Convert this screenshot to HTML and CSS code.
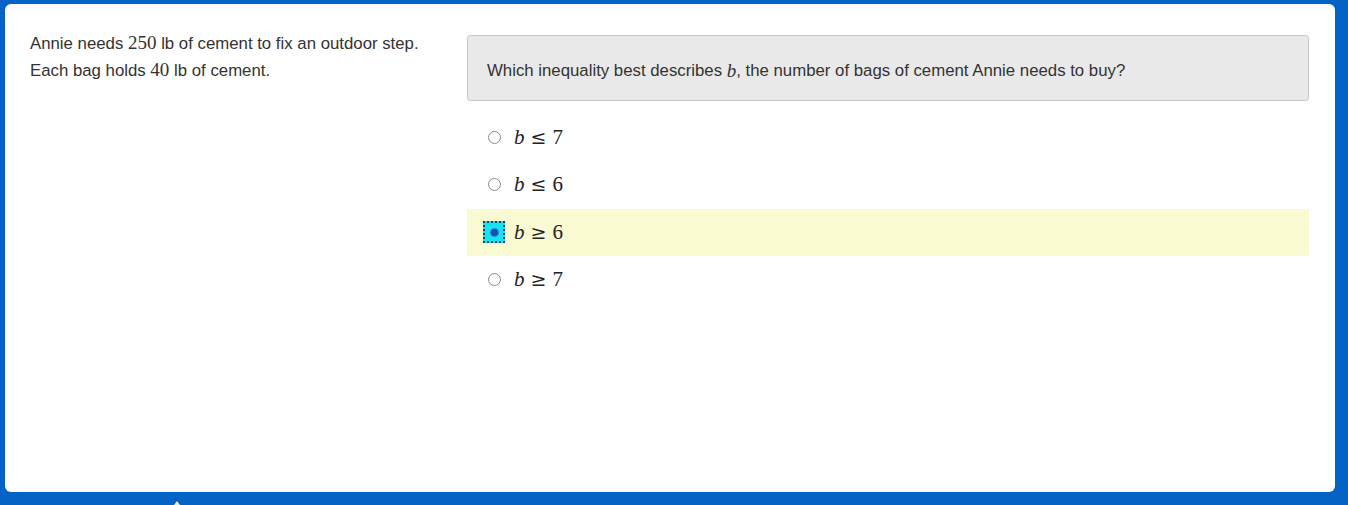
FILE: index.html
```html
<!DOCTYPE html>
<html>
<head>
<meta charset="utf-8">
<link rel="stylesheet" href="styles.css">
</head>
<body>
<div class="card">
  <div class="stimulus">
    <p>Annie needs <span class="m">250</span> lb of cement to fix an outdoor step.</p>
    <p>Each bag holds <span class="m">40</span> lb of cement.</p>
  </div>
  <div class="item">
    <div class="stem">Which inequality best describes <span class="m i">b</span>, the number of bags of cement Annie needs to buy?</div>
    <ul class="choices">
      <li class="choice"><span class="rwrap"><span class="radio"></span></span><span class="math"><span class="i">b</span><span class="op">≤</span>7</span></li>
      <li class="choice"><span class="rwrap"><span class="radio"></span></span><span class="math"><span class="i">b</span><span class="op">≤</span>6</span></li>
      <li class="choice selected"><span class="rwrap focus"><span class="radio checked"></span></span><span class="math"><span class="i">b</span><span class="op">≥</span>6</span></li>
      <li class="choice"><span class="rwrap"><span class="radio"></span></span><span class="math"><span class="i">b</span><span class="op">≥</span>7</span></li>
    </ul>
  </div>
</div>
<span class="mark"></span>
</body>
</html>
```
FILE: styles.css
```css
html, body {
  margin: 0;
  padding: 0;
}
body {
  background: #0563c6;
  height: 505px;
  overflow: hidden;
  position: relative;
  font-family: "Liberation Sans", Arial, sans-serif;
  color: #333;
}
.card {
  margin: 4px 0 0 5px;
  width: 1330px;
  height: 488px;
  box-sizing: border-box;
  background: #fff;
  border-radius: 6px;
  display: flex;
  gap: 25px;
  padding: 26px 26px 0 25px;
}
.stimulus {
  width: 412px;
  flex: none;
  font-size: 16.8px;
  line-height: 27px;
}
.stimulus p {
  margin: 0;
  height: 27px;
}
.m {
  font-family: "Liberation Serif", "DejaVu Serif", serif;
  font-size: 19px;
  line-height: 1;
}
.i {
  font-style: italic;
}
.item {
  flex: 1;
  padding-top: 5px;
}
.stem {
  height: 66px;
  box-sizing: border-box;
  background: #e9e9e9;
  border: 1px solid #c9c9c9;
  border-radius: 3px;
  padding: 5px 19px 0;
  display: flex;
  align-items: center;
  font-size: 16.8px;
  white-space: pre;
}
.choices {
  list-style: none;
  margin: 13px 0 0;
  padding: 0;
}
.choice {
  height: 47px;
  display: flex;
  align-items: center;
  padding-left: 16px;
}
.choice:nth-child(n+2) {
  height: 47.5px;
}
.choice.selected {
  background: #fafad2;
}
.rwrap {
  width: 22px;
  height: 22px;
  box-sizing: border-box;
  display: flex;
  align-items: center;
  justify-content: center;
  margin-right: 9px;
}
.rwrap.focus {
  background: #14e4f2;
  border: 2px dotted #1b3f5e;
}
.radio {
  width: 13px;
  height: 13px;
  box-sizing: border-box;
  border: 1px solid #8a8a8a;
  border-radius: 50%;
  background: #fff;
  display: flex;
  align-items: center;
  justify-content: center;
}
.radio.checked {
  border: none;
  background: transparent;
}
.radio.checked::after {
  content: "";
  width: 9px;
  height: 9px;
  box-sizing: border-box;
  border-radius: 50%;
  background: #1452b8;
  border: 1px solid #3c7ad0;
}
.math {
  font-family: "Liberation Serif", "DejaVu Serif", serif;
  font-size: 21px;
  color: #222;
  display: flex;
  align-items: baseline;
}
.op {
  font-family: "DejaVu Serif", serif;
  font-size: 19px;
  margin: 0 6px 0 6px;
}
.mark {
  position: absolute;
  left: 174px;
  top: 501px;
  width: 0;
  height: 0;
  border-left: 3px solid transparent;
  border-right: 3px solid transparent;
  border-bottom: 4px solid #e8f0ff;
}
```
